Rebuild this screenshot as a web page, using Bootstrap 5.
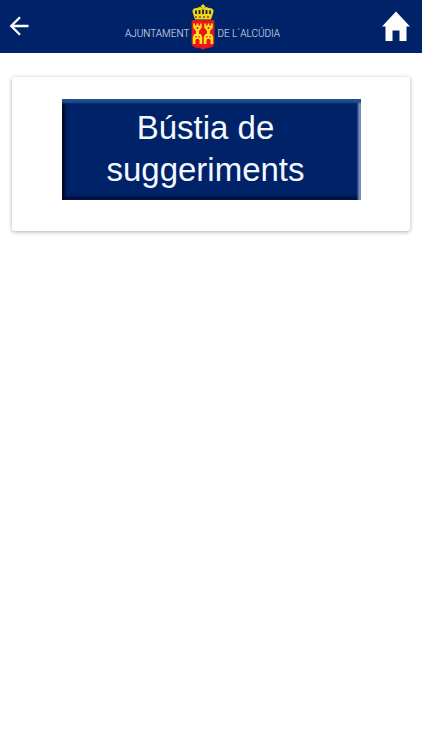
<!DOCTYPE html>
<html lang="ca">
<head>
<meta charset="utf-8">
<meta name="viewport" content="width=device-width, initial-scale=1">
<title>Ajuntament de l´Alcúdia</title>
<link href="https://cdn.jsdelivr.net/npm/bootstrap@5.3.0/dist/css/bootstrap.min.css" rel="stylesheet">
<style>
body { background: #fff; font-family: "Liberation Sans", Arial, sans-serif; }
.topbar { background: #002268; height: 53px; padding: 0 12px 2px 8px; }
.bar-link { color: #fff; line-height: 0; }
.town { color: #e4e9f3; font-family: Roboto, sans-serif; font-size: 10px; font-weight: 300; line-height: 12px; gap: 2px; padding: 2px 7px 0 0; }
.town-word { padding-top: 14px; }
.panel { border: 0; border-radius: 3px; margin: 24px 12px; padding: 22px 49px 31px 50px; box-shadow: 0 1px 4px rgba(0, 0, 0, .32); }
.bevel {
  background: #002268; color: #f4f8ff; border: 0; width: 100%; height: 101px;
  padding: 8px 12px 9px 0; font-size: 33px; line-height: 42px;
  box-shadow: inset 0 5px 2px -1px #1f508a, inset -4px 0 2px -1px #7895bd, inset 4px 0 3px -1px #000820, inset 0 -4px 3px -1px #000d38;
}
</style>
<script src="https://cdn.jsdelivr.net/npm/bootstrap@5.3.0/dist/js/bootstrap.bundle.min.js"></script>
</head>
<body>
<header class="topbar d-flex align-items-center">
  <a class="bar-link" href="#" aria-label="Enrere">
    <svg width="22" height="22" viewBox="0 0 22 22" fill="none" stroke="#fff" stroke-width="2.3"><path d="M20.500 11H3.600M12 2.200 3.200 11l8.800 8.800"/></svg>
  </a>
  <div class="town d-flex align-items-center justify-content-center flex-grow-1 text-nowrap">
    <span class="town-word">AJUNTAMENT</span>
    <svg width="24" height="46" viewBox="0 0 24 46" aria-hidden="true">
      <path d="M4 15.500 1.500 8Q1 4 6 4Q9 2.500 11 3.500V3H9.800V1.500H11V.5h2v1h1.200V3H13v.5q2-1 5 .5 5 0 4.500 4L20 15.500Z" fill="#f0d51b"/>
      <path d="M5 6.500v3.500M8.500 6v4M15.500 6v4M19 6.500v3.500M12 5.500v4.500" stroke="#16243f" stroke-width="1.800"/>
      <path d="M4 13h16" stroke="#8d4320" stroke-width="1.300" stroke-dasharray="2 2"/>
      <path d="M1 16.500h22v22.500q0 4-5 4.500-4 0-6 2-2-2-6-2-5-.5-5-4.500Z" fill="#ed151a" stroke="#b52b22" stroke-width=".8"/>
      <g id="tower" fill="#ffe020">
        <path d="M2.200 19.500h1.700v2h1.700v-2h1.800v2h1.700v-2h1.700v4l-2.300 3h-4l-2.300-3Z"/>
        <path d="M5 26h3v4h1.700l1.500 3v7H8.500v-4q-2-2.500-4 0v4H1.800v-7l1.500-3H5Z"/>
        <path d="M5.700 23h1.600v2H5.700ZM4.300 32h1.200v1.500H4.300ZM7.500 32h1.200v1.500H7.500Z" fill="#ed151a"/>
      </g>
      <use href="#tower" x="11"/>
    </svg>
    <span class="town-word">DE L´ALCÚDIA</span>
  </div>
  <a class="bar-link" href="#" aria-label="Inici">
    <svg width="28" height="30" viewBox="0 0 28 30" fill="#fff"><path d="M14 .5 28 15.500h-3.500V30h-7V19.500h-7V30h-7V15.500H0Z"/></svg>
  </a>
</header>
<main>
  <section class="panel card">
    <button type="button" class="bevel">Bústia de<br>suggeriments</button>
  </section>
</main>
</body>
</html>
